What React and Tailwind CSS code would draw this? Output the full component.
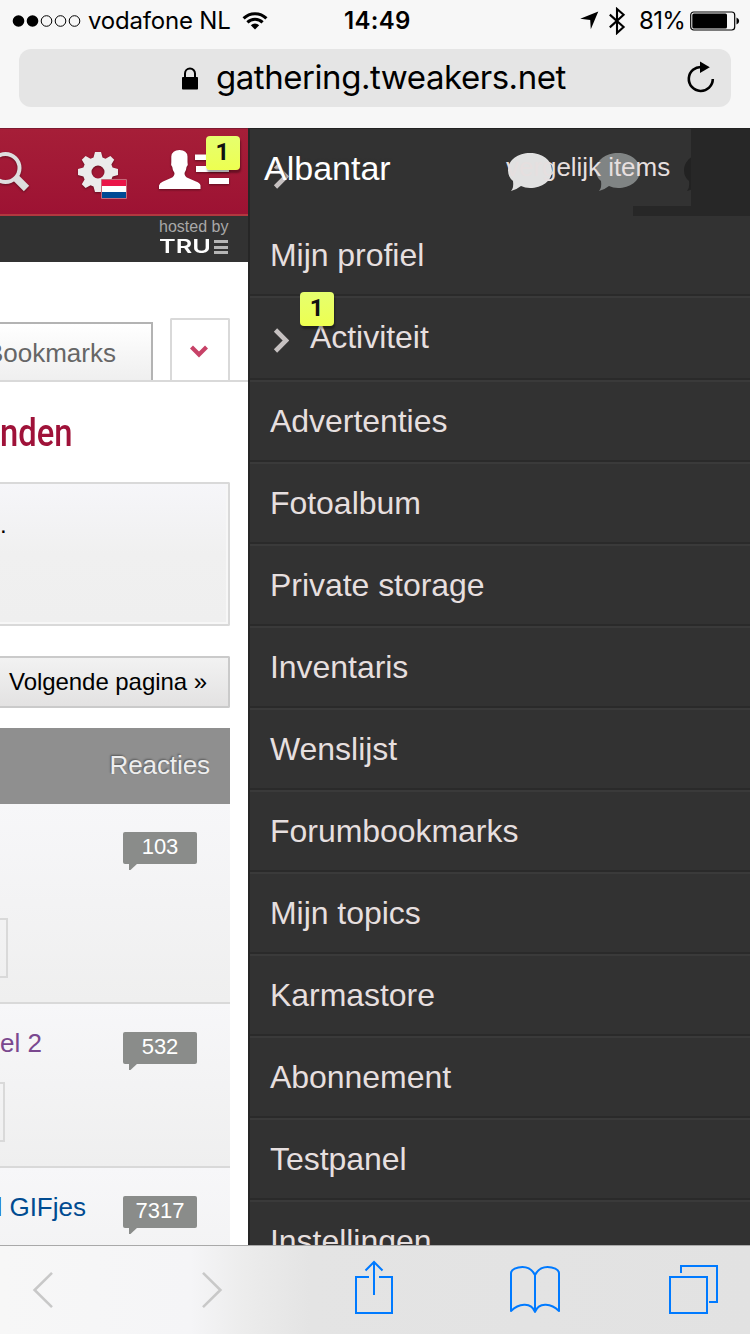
const menuItems = [
  "Advertenties",
  "Fotoalbum",
  "Private storage",
  "Inventaris",
  "Wenslijst",
  "Forumbookmarks",
  "Mijn topics",
  "Karmastore",
  "Abonnement",
  "Testpanel",
  "Instellingen"
];



/* BROWSER CHROME */

function StatusBar() {

  return (

    <div className="flex h-[41px] w-full items-center font-['Inter',sans-serif] text-black">

      <svg width="70" height="14" viewBox="0 0 70 14" className="ml-[12px] shrink-0">
        <circle cx="6.5" cy="7" r="5.8" />
        <circle cx="20.5" cy="7" r="5.8" />
        <circle cx="34.5" cy="7" r="5.3" fill="none" stroke="#000" />
        <circle cx="48.5" cy="7" r="5.3" fill="none" stroke="#000" />
        <circle cx="62.5" cy="7" r="5.3" fill="none" stroke="#000" />
      </svg>

      <span className="ml-[6px] w-[144px] shrink-0 whitespace-nowrap pt-[1px] text-[24px] leading-[40px] tracking-[-0.2px]">
        vodafone NL
      </span>

      <svg width="26" height="18" viewBox="0 0 26 18" className="ml-[10px] shrink-0" fill="none" stroke="#000" strokeWidth="3">
        <path d="M1.6 6.4a16 16 0 0 1 22.8 0" />
        <path d="M5.4 10.4a10.7 10.7 0 0 1 15.2 0" />
        <path d="M13 17.6l-4.2-4.3a6 6 0 0 1 8.4 0z" fill="#000" stroke="none" />
      </svg>

      <span className="ml-[76px] w-[69px] shrink-0 whitespace-nowrap pt-[1px] text-[24px] font-semibold leading-[40px] tracking-[0.3px]">
        14:49
      </span>

      <svg width="19" height="19" viewBox="0 0 19 19" className="ml-[167px] shrink-0">
        <path d="M18.3 0.6L10.8 18.2L10.2 8.9L0.2 7.8z" />
      </svg>

      <svg width="18" height="28" viewBox="0 0 18 28" className="ml-[9px] shrink-0" fill="none" stroke="#000" strokeWidth="2.1">
        <path d="M1.8 7.6L15.6 20L9 26V2l6.600 5.800L1.800 20.400" />
      </svg>

      <span className="ml-[13px] w-[46px] shrink-0 whitespace-nowrap pt-[1px] text-[24px] leading-[40px] tracking-[-0.7px]">
        81%
      </span>

      <svg width="50" height="20" viewBox="0 0 50 20" className="ml-[5px] shrink-0">
        <rect x="0.7" y="1" width="44" height="18" rx="3" fill="none" stroke="#000" strokeWidth="1.2" />
        <rect x="2.3" y="2.6" width="34.7" height="14.8" rx="1.5" />
        <path d="M46.5 6.500q2.700 1 2.700 3.500t-2.700 3.500z" />
      </svg>

    </div>

  );

}

function AddressBar() {

  return (

    <div className="mx-[19px] mt-[8px] flex h-[58px] items-center rounded-[12px] bg-[#e5e5e5] font-['Inter',sans-serif]">

      <svg width="16" height="23" viewBox="0 0 16 23" className="ml-[163px] shrink-0">
        <path d="M3 11V6.5a5 5 0 0 1 10 0V11" fill="none" stroke="#000" strokeWidth="2" />
        <rect x="0" y="10" width="16" height="12.5" rx="0.8" />
      </svg>

      <span className="-mt-[2px] ml-[18px] w-[352px] shrink-0 whitespace-nowrap text-[33px] leading-[58px] tracking-[-0.450px] text-black">
        gathering.tweakers.net
      </span>

      <svg width="28" height="32" viewBox="0 0 28 32" className="-mt-[2px] ml-[119px] shrink-0">
        <path d="M15 6A12 12 0 1 0 25.8 18" fill="none" stroke="#000" strokeWidth="2.6" />
        <path d="M13 0.5L22.8 6.3L13 12z" />
      </svg>

    </div>

  );

}

function Toolbar() {

  return (

    <div className="flex h-[89px] shrink-0 items-start border-t border-[#a9a9a9] bg-[linear-gradient(to_right,#f7f7f7_0px,#f5f5f7_190px,#ececec_245px,#e4e4e4_310px,#e2e2e2_750px)]">

      <svg width="22" height="38" viewBox="0 0 22 38" className="ml-[32px] mt-[25px] shrink-0" fill="none" stroke="#c8c8c8" strokeWidth="2.6">
        <path d="M20 1.8L2.6 19L20 36.2" />
      </svg>

      <svg width="22" height="38" viewBox="0 0 22 38" className="ml-[147px] mt-[25px] shrink-0" fill="none" stroke="#c8c8c8" strokeWidth="2.6">
        <path d="M2 1.8L19.4 19L2 36.2" />
      </svg>

      <svg width="40" height="56" viewBox="0 0 40 56" className="ml-[131px] mt-[13px] shrink-0" fill="none" stroke="#007aff" strokeWidth="2">
        <path d="M15 18H2V54H38V18H25" />
        <path d="M20 36V3M11.500 11.500L20 3l8.500 8.500" />
      </svg>

      <svg width="52" height="50" viewBox="0 0 52 50" className="ml-[115px] mt-[19px] shrink-0" fill="none" stroke="#007aff" strokeWidth="2" strokeLinejoin="round">
        <path d="M26 47V10C23.500 5 19 2 13.500 2C8 2 2 4.500 2 8V46C9 39 22 36 26 47C30 36 43 39 50 46V8C50 4.500 44 2 38.500 2C33 2 28.500 5 26 10" />
      </svg>

      <svg width="50" height="50" viewBox="0 0 50 50" className="ml-[108px] mt-[18px] shrink-0" fill="none" stroke="#007aff" strokeWidth="2">
        <rect x="1" y="13" width="37" height="36" />
        <path d="M12 9V2H48V38H40" />
      </svg>

    </div>

  );

}



/* SHARED BITS */

function Counter() {

  return (
    <span className="block h-[34px] w-[34px] rounded-[4px] bg-linear-to-b from-[#e6ff6e] to-[#edff50] pr-[1px] text-center font-['Roboto',sans-serif] text-[24px] font-bold leading-[32px] text-[#111] shadow-[1px_3px_2px_rgba(0,0,0,0.35)]">
      1
    </span>
  );

}

function Chevron() {

  return (
    <svg width="16" height="25" viewBox="0 0 16 25" fill="none" stroke="#c6c1c1" strokeWidth="4.600" className="shrink-0 blur-[0.500px]">
      <path d="M2.500 2L13 12.500L2.500 23" />
    </svg>
  );

}

function Reactions({ count }) {

  return (

    <div className="relative ml-auto mr-[33px] mt-[28px] h-[32px] w-[74px] shrink-0 rounded-[2px] bg-[#8a8c8a] text-center text-[22px] leading-[29px] text-white">
      {count}
      <svg width="9" height="7" viewBox="0 0 9 7" className="absolute left-[6px] top-[31px]">
        <path d="M0 0H9L1.500 7H0z" fill="#8a8c8a" />
      </svg>
    </div>

  );

}



/* FORUM PAGE */

function SiteHeader() {

  return (

    <div className="relative flex h-[88px] shrink-0 border-b-2 border-t border-b-[#b2383f] border-t-[#7d1a30] bg-linear-to-b from-[#a61e38] to-[#9d1233]">

      <svg width="32" height="42" viewBox="0 0 32 42" className="mt-[22px] shrink-0 drop-shadow-[0_1px_1px_rgba(0,0,0,0.4)]" fill="none" stroke="#dedede">
        <circle cx="5.500" cy="17" r="14" strokeWidth="4" />
        <path d="M15 26L26.500 37.500" strokeWidth="7.500" />
      </svg>

      <svg width="40" height="40" viewBox="-20 -20 40 40" className="ml-[46px] mt-[23px] shrink-0 drop-shadow-[0_1px_1px_rgba(0,0,0,0.4)]" fill="#ebebeb">
        <path
          fillRule="evenodd"
          d="M-3-20H3L4.500-14.600L7.500-13.300L12.400-16L16.200-12.200L13.400-7.400L14.600-4.400L20-3V3L14.600 4.400L13.400 7.400L16.200 12.200L12.400 16L7.500 13.300L4.500 14.600L3 20H-3L-4.500 14.600L-7.500 13.300L-12.400 16L-16.200 12.200L-13.400 7.400L-14.600 4.400L-20 3V-3L-14.600-4.400L-13.400-7.400L-16.200-12.200L-12.400-16L-7.500-13.300L-4.500-14.600ZM0-6.500A6.500 6.500 0 1 0 0 6.500A6.500 6.500 0 1 0 0-6.500Z"
        />
      </svg>

      <svg width="26" height="20" viewBox="0 0 26 20" className="absolute left-[101px] top-[50px]">
        <rect width="26" height="20" rx="1" fill="#c56a7a" />
        <rect x="1" y="1" width="24" height="6" fill="#ea1548" />
        <rect x="1" y="7" width="24" height="6" fill="#fff" />
        <rect x="1" y="13" width="24" height="6" fill="#004a94" />
      </svg>

      <svg width="71" height="40" viewBox="0 0 71 40" className="ml-[41px] mt-[21px] shrink-0 drop-shadow-[0_1px_1px_rgba(0,0,0,0.4)]" fill="#fff">
        <path d="M0 39V35.500Q0.500 33 4 31.500L12 28Q15.500 26.500 15.500 23Q13.500 20.500 13.300 17Q11.500 15 12.300 12V6.500Q13 0 20.500 0T28.500 6.500V12Q29.500 15 27.500 17Q27.300 20.500 25.500 23Q25.500 26.500 29 28L37 31.500Q41 33 41.500 35.500V39z" />
        <path d="M36 4.500H70V10H36zM37 16H70V22H37zM50 28H70V34H50z" />
      </svg>

      <div className="absolute left-[206px] top-[7px]">
        <Counter />
      </div>

    </div>

  );

}

function HostedBy() {

  return (

    <div className="flex h-[46px] shrink-0 flex-col bg-[#323232] pl-[159px]">

      <span className="h-[22px] whitespace-nowrap text-[16px] leading-[21px] text-[#a8a8a8]">
        hosted by
      </span>

      <div className="flex h-[18px] items-center">
        <span className="w-[55px] origin-left scale-x-[1.330] whitespace-nowrap font-['Inter',sans-serif] text-[19px] font-semibold leading-[18px] text-white">
          TRU
        </span>
        <div className="flex flex-col gap-[2.500px]">
          <span className="h-[3px] w-[14px] bg-[#b5b5b5]" />
          <span className="h-[3px] w-[14px] bg-[#b5b5b5]" />
          <span className="h-[3px] w-[14px] bg-[#b5b5b5]" />
        </div>
      </div>

    </div>

  );

}

function ForumPage() {

  return (

    <div className="flex w-[248px] shrink-0 flex-col overflow-hidden bg-white">

      <SiteHeader />
      <HostedBy />

      {/* TABS */}

      <div className="flex h-[120px] shrink-0 items-end border-b-2 border-[#d9d9d9]">

        <div className="flex h-[58px] w-[153px] justify-end border-r-2 border-t-2 border-[#b3b3b3] bg-linear-to-b from-white to-[#efefef] pr-[35px] text-[26px] leading-[59px] text-[#666]">
          Bookmarks
        </div>

        <div className="ml-[17px] flex h-[62px] w-[60px] items-center justify-center rounded-t-[2px] border-2 border-b-0 border-[#d9d9d9] pr-[2px]">
          <svg width="18" height="14" viewBox="0 0 18 14" fill="none" stroke="#c74267" strokeWidth="4.200" className="mt-[3px] blur-[0.400px]">
            <path d="M1.500 2L9 9.500L16.500 2" />
          </svg>
        </div>

      </div>

      <h1 className="h-[100px] w-[248px] origin-left scale-x-[0.840] whitespace-nowrap pt-[1px] font-['Roboto',sans-serif] text-[39px] font-medium leading-[100px] text-[#9f1239]">
        nden
      </h1>

      <div className="mr-[18px] h-[144px] shrink-0 rounded-r-[2px] border-2 border-l-0 border-[#d9d9d9] bg-linear-to-b from-[#f6f6f9] via-[#f0f0f0] to-[#efefef] pt-[26px] text-[24px] leading-[30px] text-black shadow-[inset_-2px_-2px_0_#f7f7f7]">
        .
      </div>

      <button className="mr-[18px] mt-[30px] h-[52px] shrink-0 whitespace-nowrap rounded-r-[2px] border-2 border-l-0 border-[#cacaca] bg-linear-to-b from-[#f2f2f2] to-[#e3e2e2] pl-[9px] text-left text-[24px] leading-[48px] tracking-[-0.050px] text-black">
        Volgende pagina »
      </button>

      {/* TOPIC LIST */}

      <div className="mr-[18px] mt-[20px] h-[76px] shrink-0 bg-[#8f8f8f] pr-[20px] text-right text-[26px] leading-[74px] tracking-[-0.080px] text-[#eee] [text-shadow:-1px_-1px_2px_rgba(0,0,0,0.4)]">
        Reacties
      </div>

      <div className="mr-[18px] flex h-[200px] shrink-0 flex-col border-b-2 border-[#d9d9d9] bg-linear-to-b from-[#f7f7f9] to-[#efefef]">
        <Reactions count="103" />
        <div className="mt-[54px] h-[60px] w-[8px] border-2 border-l-0 border-[#d9d9d9]" />
      </div>

      <div className="mr-[18px] flex h-[164px] shrink-0 flex-col border-b-2 border-[#d9d9d9] bg-linear-to-b from-[#f7f7f9] to-[#efefef]">
        <div className="flex h-[60px] shrink-0">
          <a className="flex w-[42px] shrink-0 justify-end whitespace-nowrap pt-[24px] text-[26px] leading-[30px] text-[#7a488f]">
            el 2
          </a>
          <Reactions count="532" />
        </div>
        <div className="mt-[18px] h-[60px] w-[5px] border-2 border-l-0 border-[#d9d9d9]" />
      </div>

      <div className="mr-[18px] flex h-[164px] shrink-0 bg-linear-to-b from-[#f7f7f9] to-[#efefef]">
        <a className="flex w-[86px] shrink-0 justify-end whitespace-nowrap pt-[24px] text-[26px] leading-[30px] text-[#004b91]">
          l GIFjes
        </a>
        <Reactions count="7317" />
      </div>

    </div>

  );

}



/* ACCOUNT MENU */

function MenuHeader() {

  return (

    <div className="relative flex h-[88px] shrink-0 overflow-hidden border-t border-[#222]">

      <div className="absolute left-[23px] top-[35px]">
        <Chevron />
      </div>

      <span className="relative ml-[14px] w-[242px] shrink-0 text-[34px] leading-[79px] text-white [text-shadow:0_-2px_2px_#323232]">
        Albantar
      </span>

      <svg width="186" height="44" viewBox="0 0 186 44" className="absolute left-[256px] top-[21px]">
        <path d="M24 3C36 3 46 10 46 20.500S36 38 24 38Q19 38 15 36Q10 40 5 41Q8 38 7 31Q2 27 2 20.500C2 10 12 3 24 3z" fill="#e1e1e1" />
        <path d="M112 3C124 3 134 10 134 20.500S124 38 112 38Q107 38 103 36Q98 40 93 41Q96 38 95 31Q90 27 90 20.500C90 10 100 3 112 3z" fill="#808484" />
        <path d="M200 3C212 3 222 10 222 20.500S212 38 200 38Q195 38 191 36Q186 40 181 41Q184 38 183 31Q178 27 178 20.500C178 10 188 3 200 3z" fill="#222" />
      </svg>

      <span className="relative whitespace-nowrap text-[26px] leading-[77px] tracking-[-0.040px] text-[#e6dfdf]">
        vergelijk items
      </span>

      <div className="absolute right-0 top-0 h-[88px] w-[59px] bg-[#272727]" />
      <div className="absolute right-[59px] top-[77px] h-[11px] w-[58px] bg-[#272727]" />

    </div>

  );

}

function AccountMenu() {

  return (

    <div className="flex flex-1 flex-col overflow-hidden border-l-2 border-[#262626] bg-[#323232] text-[#e6dfdf]">

      <MenuHeader />

      <ul className="text-[32px] leading-[78px] tracking-[-0.040px]">

        <li className="h-[80px] border-b-2 border-[#2a2a2a] pl-[20px]">Mijn profiel</li>

        <li className="relative flex h-[84px] items-center border-b-2 border-t-2 border-b-[#2a2a2a] border-t-[#3a3a3a] pl-[23px]">
          <div className="mt-[4px]">
            <Chevron />
          </div>
          <span className="-mt-[2px] ml-[21px]">Activiteit</span>
          <div className="absolute left-[50px] top-[-6px]">
            <Counter />
          </div>
        </li>

        {menuItems.map((item) => (
          <li key={item} className="h-[82px] border-b-2 border-t-2 border-b-[#2a2a2a] border-t-[#3a3a3a] pl-[20px]">
            {item}
          </li>
        ))}

      </ul>

    </div>

  );

}



function App() {

  return (

    <div className="flex h-[1334px] w-[750px] flex-col overflow-hidden bg-[#f7f7f7] font-['Liberation_Sans',Arial,sans-serif]">

      <div className="h-[128px] shrink-0">
        <StatusBar />
        <AddressBar />
      </div>

      <div className="flex h-[1117px] shrink-0 overflow-hidden">
        <ForumPage />
        <AccountMenu />
      </div>

      <Toolbar />

    </div>

  );

}

export default App;
